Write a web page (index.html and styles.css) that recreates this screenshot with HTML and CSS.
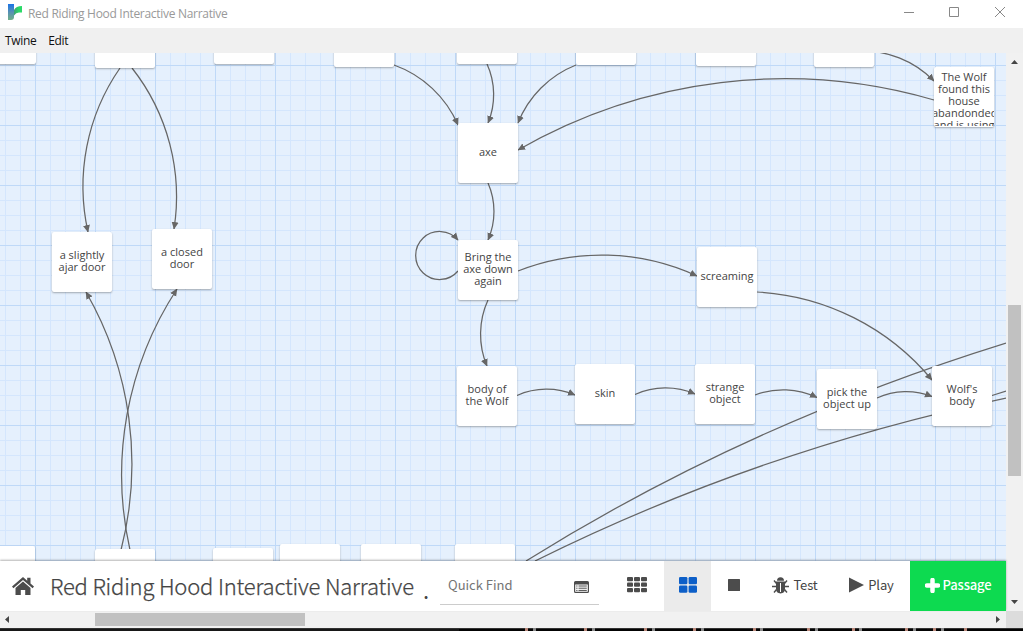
FILE: index.html
```html
<!DOCTYPE html>
<html lang="en">
<head>
<meta charset="utf-8">
<title>Red Riding Hood Interactive Narrative</title>
<link rel="stylesheet" href="styles.css">
</head>
<body>
<div class="window">
  <header class="titlebar">
    <svg class="logo" width="16" height="18" viewBox="0 0 16 18">
      <defs>
        <linearGradient id="stem" x1="0" y1="0" x2="0" y2="1"><stop offset="0" stop-color="#1b74e8"/><stop offset=".5" stop-color="#5790b4"/><stop offset="1" stop-color="#6fb087"/></linearGradient>
        <linearGradient id="arm" x1="0" y1="0" x2="1" y2="0"><stop offset="0" stop-color="#3f9f74"/><stop offset=".6" stop-color="#2bd968"/></linearGradient>
      </defs>
      <path d="M1 1h6v13q0 3-3 3H1z" fill="url(#stem)"/>
      <path d="M7 7Q9 3 15 3v6.500H12q-3 0-5 3z" fill="url(#arm)"/>
    </svg>
    <span class="window-title">Red Riding Hood Interactive Narrative</span>
    <svg class="controls" width="110" height="27" viewBox="0 0 110 27" fill="none" stroke="#888">
      <path d="M4 12.500h10M49.500 7.500h9v9h-9zM95 7l10 10M105 7L95 17"/>
    </svg>
  </header>
  <nav class="menubar"><span class="menu-twine">Twine</span><span class="menu-edit">Edit</span></nav>
  <div class="body">
    <div class="main">
      <div class="canvas">
        <svg class="links" width="1006" height="508" viewBox="0 53 1006 508">
          <defs>
            <marker id="arrow" markerUnits="userSpaceOnUse" markerWidth="8" markerHeight="8" refX="7" refY="4" orient="auto"><path d="M0 .5L7.500 4L0 7.500z" fill="#666"/></marker>
          </defs>
          <g class="arrows" marker-end="url(#arrow)">
            <path d="M120 68A208 208 0 0 0 88 232"/>
            <path d="M132 68A208 208 0 0 1 174 229"/>
            <path d="M394 65A110 110 0 0 1 458 125"/>
            <path d="M487 64A74 74 0 0 1 488 123"/>
            <path d="M576 65A103 103 0 0 0 518 123"/>
            <path d="M934 100A535 535 0 0 0 518 150"/>
            <path d="M858 51A100 100 0 0 1 934 81"/>
            <path d="M488 183A71 71 0 0 1 488 240"/>
            <path d="M488 300A82 82 0 0 0 487 366"/>
            <path d="M458 271A24 24 0 1 1 458 240"/>
            <path d="M518 271A228 228 0 0 1 697 276"/>
            <path d="M757 292A244 244 0 0 1 932 380"/>
            <path d="M517 395.500A73 73 0 0 1 575 395"/>
            <path d="M635 394.500A75 75 0 0 1 695 394"/>
            <path d="M755 395A78 78 0 0 1 817 397.500"/>
            <path d="M877 398A69 69 0 0 1 932 396.500"/>
            <path d="M121 550A345 345 0 0 0 86 292"/>
            <path d="M130 550A340 340 0 0 1 177 289"/>
          </g>
          <path d="M526 561Q746 423.700 1006 343M535 561Q759 450 1006 398M992 395.500L1006 391"/>
        </svg>
        <div class="passage p-a"></div><div class="passage p-b"></div><div class="passage p-c"></div><div class="passage p-d"></div>
        <div class="passage p-e"></div><div class="passage p-f"></div><div class="passage p-g"></div><div class="passage p-h"></div>
        <div class="passage p-long"><span>The Wolf found this house abandonded and is using</span></div>
        <div class="passage p-axe"><span>axe</span></div>
        <div class="passage p-bring"><span>Bring the<br>axe down<br>again</span></div>
        <div class="passage p-ajar"><span>a slightly<br>ajar door</span></div>
        <div class="passage p-closed"><span>a closed<br>door</span></div>
        <div class="passage p-scream"><span>screaming</span></div>
        <div class="passage p-body"><span>body of<br>the Wolf</span></div>
        <div class="passage p-skin"><span>skin</span></div>
        <div class="passage p-strange"><span>strange<br>object</span></div>
        <div class="passage p-pick"><span>pick the<br>object up</span></div>
        <div class="passage p-wolf"><span>Wolf's<br>body</span></div>
        <div class="passage p-i"></div><div class="passage p-j"></div><div class="passage p-k"></div><div class="passage p-l"></div><div class="passage p-m"></div><div class="passage p-n"></div>
      </div>
      <div class="toolbar">
        <svg class="home" width="22" height="18" viewBox="0 0 22 18" fill="#4c4c4c"><path d="M11 0L0 9.500l1.400 1.700L11 3l9.600 8.200L22 9.500l-3.500-3V.800h-3.300v2.900z"/><path d="M11 4.600L3.500 11v7h5.300v-5h4.400v5h5.300v-7z"/></svg>
        <span class="story">Red Riding Hood Interactive Narrative</span><span class="dot">.</span>
        <div class="find"><span class="placeholder">Quick Find</span>
          <svg width="15" height="12" viewBox="0 0 15 12"><path d="M1.500 0h12Q15 0 15 1.500v9q0 1.500-1.500 1.500h-12Q0 12 0 10.500v-9Q0 0 1.500 0zM1.200 3.500v7.300h12.600V3.500z" fill="#4c4c4c" fill-rule="evenodd"/><path d="M2.200 5h1.300M4.500 5h8.300M2.200 7.200h1.300M4.500 7.200h8.300M2.200 9.400h1.300M4.500 9.400h8.300" stroke="#4c4c4c" stroke-width="1"/></svg>
        </div>
        <div class="btn zoom-small"><svg width="20" height="16" viewBox="0 0 20 16" fill="#4c4c4c"><g id="row"><rect width="6" height="4.300" rx="1"/><rect x="7" width="6" height="4.300" rx="1"/><rect x="14" width="6" height="4.300" rx="1"/></g><use href="#row" y="5.500"/><use href="#row" y="11"/></svg></div>
        <div class="btn zoom-medium"><svg width="18" height="16" viewBox="0 0 18 16" fill="#0d5fc8"><rect width="8.400" height="7.300" rx="1.300"/><rect x="9.600" width="8.400" height="7.300" rx="1.300"/><rect y="8.400" width="8.400" height="7.300" rx="1.300"/><rect x="9.600" y="8.400" width="8.400" height="7.300" rx="1.300"/></svg></div>
        <div class="btn zoom-large"><svg width="12" height="12"><rect width="12" height="12" rx=".5" fill="#4c4c4c"/></svg></div>
        <div class="btn test"><svg width="17" height="17" viewBox="0 0 17 17"><path d="M5 3.700a3.500 3.500 0 0 1 7 0zM4 4.500h9V12q0 4-4.500 4.500Q4 16 4 12z" fill="#4c4c4c"/><path d="M4.500 6.500L2 3.500M12.500 6.500L15 3.500M4 9.500H0M13 9.500h4M4.500 12.500L2 15.500M12.500 12.500l2.500 3" stroke="#4c4c4c" stroke-width="1.400" fill="none"/><path d="M8.500 6v9" stroke="#fff"/></svg><span>Test</span></div>
        <div class="btn play"><svg width="15" height="16"><path d="M0 .500v15L15 8z" fill="#4c4c4c"/></svg><span>Play</span></div>
        <div class="btn add"><svg width="15" height="15" viewBox="0 0 15 15"><path d="M7.500 2v11M2 7.500h11" stroke="#fff" stroke-width="4.500" stroke-linecap="round"/></svg><span>Passage</span></div>
      </div>
    </div>
    <div class="vscroll">
      <svg width="17" height="558" viewBox="0 0 17 558"><path d="M5 11l3.500-4 3.500 4zM5 547l3.500 4 3.500-4z" fill="#454545"/><rect x="2" y="252" width="13" height="171" fill="#c1c1c1"/></svg>
    </div>
  </div>
  <div class="hscroll">
    <svg width="1006" height="17"><path d="M9 5L5 8.500 9 12zM996 5l4 3.500-4 3.500z" fill="#454545"/><rect x="95" y="2" width="210" height="13" fill="#c1c1c1"/></svg>
    <div class="corner"></div>
  </div>
  <svg class="edge" width="1023" height="3"><rect width="1023" height="3" fill="#171717"/><rect x="459" width="564" height="3" fill="#030303"/><rect width="1023" height="1" fill="#333"/>
    <path d="M525 1.500h3M584 1.500h3M644 1.500h3M693 1.500h3M753 1.500h3M807 1.500h3M852 1.500h3M905 1.500h3M933 1.500h3M964 1.500h3" stroke="#b88678" stroke-width="3"/>
    <path d="M533 1.500h3M592 1.500h3M652 1.500h3M701 1.500h3M760 1.500h3M815 1.500h3M859 1.500h3M913 1.500h3M941 1.500h3" stroke="#888" stroke-width="3"/></svg>
</div>
</body>
</html>
```
FILE: styles.css
```css
* { box-sizing: border-box; }
body { margin: 0; overflow: hidden; background: #fff; color: #444; font-family: "Noto Sans CJK JP", "Open Sans", sans-serif; }
svg { display: block; flex: none; }
.window { width: 1023px; height: 631px; display: flex; flex-direction: column; }
.titlebar { height: 28px; flex: none; display: flex; align-items: flex-start; padding-left: 7px; background: #fff; }
.logo { margin-top: 3px; }
.window-title { margin: 5px 0 0 5px; font: 12px/17px "Open Sans", sans-serif; color: #999; letter-spacing: -.3px; white-space: nowrap; }
.controls { margin-left: auto; margin-right: 13px; width: 110px; }
.menubar { height: 25px; flex: none; display: flex; background: #f0f0f0; color: #111; font: 12px/26px "Open Sans", sans-serif; letter-spacing: -.35px; padding-left: 5px; gap: 12px; }
.body { height: 558px; flex: none; display: flex; }
.main { width: 1006px; display: flex; flex-direction: column; }
.canvas {
  position: relative; height: 508px; flex: none; overflow: hidden; background-color: #e5f0fd;
  background-image: linear-gradient(90deg, #bfd9f8 1px, transparent 1px), linear-gradient(#bfd9f8 1px, transparent 1px), linear-gradient(90deg, #d4e6fd 1px, transparent 1px), linear-gradient(#d4e6fd 1px, transparent 1px);
  background-size: 60px 60px, 60px 60px, 15px 15px, 15px 15px;
  background-position: 35px 12px, 35px 12px, 5px 12px, 5px 12px;
}
.links { position: absolute; left: 0; top: 0; fill: none; stroke: #666; stroke-width: 1.25; }
.links marker path { stroke: none; }
.passage { position: absolute; width: 60px; height: 60px; overflow: hidden; display: flex; align-items: center; justify-content: center; padding-bottom: 2px; background: #fff; border-radius: 2px; box-shadow: 0 1px 2px rgba(0,0,0,.3); font: 11px/12px "Open Sans", sans-serif; color: #444; text-align: center; }
.p-a { left: -24px; top: -49px; }
.p-b { left: 95px; top: -45px; }
.p-c { left: 214px; top: -49px; }
.p-d { left: 334px; top: -46px; }
.p-e { left: 457px; top: -49px; }
.p-f { left: 576px; top: -48px; }
.p-g { left: 696px; top: -47px; }
.p-h { left: 814px; top: -46px; }
.p-long { left: 934px; top: 14px; align-items: flex-start; padding-top: 4px; }
.p-long span { margin: 0 -2px; height: 55px; overflow: hidden; }
.p-axe { left: 458px; top: 70px; }
.p-bring { left: 458px; top: 187px; }
.p-ajar { left: 52px; top: 179px; }
.p-closed { left: 152px; top: 176px; }
.p-scream { left: 697px; top: 194px; }
.p-body { left: 457px; top: 313px; }
.p-skin { left: 575px; top: 311px; }
.p-strange { left: 695px; top: 311px; }
.p-pick { left: 817px; top: 316px; }
.p-wolf { left: 932px; top: 313px; }
.p-i { left: -25px; top: 493px; }
.p-j { left: 95px; top: 496px; }
.p-k { left: 213px; top: 495px; }
.p-l { left: 280px; top: 491px; }
.p-m { left: 361px; top: 491px; }
.p-n { left: 455px; top: 491px; }
.toolbar { position: relative; height: 50px; display: flex; align-items: center; background: #fff; box-shadow: 0 -1px 2px rgba(0,0,0,.3); white-space: nowrap; }
.home { margin-left: 12px; }
.story { width: 370px; margin-left: 16px; margin-top: -3px; font-size: 22px; line-height: 50px; font-weight: 300; letter-spacing: -.19px; -webkit-text-stroke: .25px #444; color: #444; }
.dot { width: 20px; font-size: 22px; line-height: 50px; padding-left: 3px; padding-top: 5px; }
.find { width: 159px; height: 32px; margin-top: 6px; display: flex; align-items: flex-start; justify-content: space-between; padding: 0 10px 0 8px; border-bottom: 1px solid #ccc; }
.placeholder { font-size: 13px; line-height: 17px; color: #757575; margin-top: 3px; }
.find svg { margin-top: 8px; }
.btn { height: 50px; display: flex; align-items: center; justify-content: center; font-size: 13px; flex: none; }
.btn svg { margin-top: -2px; }
.btn span { margin-top: -3px; letter-spacing: -.15px; }
.zoom-small { width: 54px; margin-left: 11px; }
.zoom-medium { width: 47px; background: #ebebeb; }
.zoom-large { width: 46px; }
.test { width: 76px; gap: 4px; }
.play { width: 77px; gap: 4px; }
.add { width: 96px; margin-left: auto; background: #0dda50; color: #fff; gap: 3px; font-weight: 500; }
.vscroll { width: 17px; background: #f1f1f1; }
.hscroll { height: 17px; flex: none; display: flex; background: #f1f1f1; }
.corner { width: 17px; background: #dcdcdc; }
.edge { height: 3px; }
```
